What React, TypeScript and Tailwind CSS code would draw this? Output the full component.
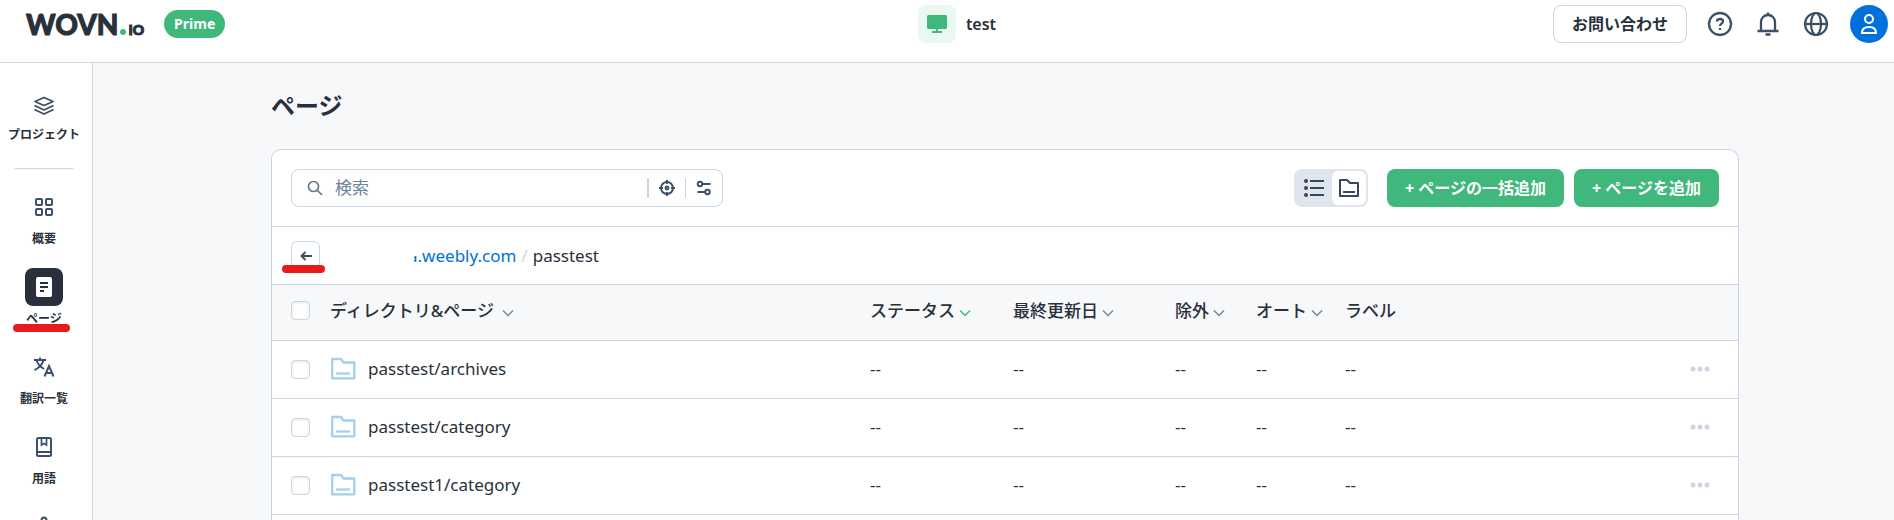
import type { ReactNode } from 'react'

const pages = ['passtest/archives', 'passtest/category', 'passtest1/category']

const columns = [
  { name: 'ステータス', sort: 'text-[#40b87c]' },
  { name: '最終更新日', sort: 'text-[#7088a0]' },
  { name: '除外', sort: 'text-[#7088a0]' },
  { name: 'オート', sort: 'text-[#7088a0]' },
]

const LayersIcon = () => (
  <svg width="22" height="20" viewBox="0 0 22 20" fill="none" stroke="currentColor" strokeWidth="1.9" strokeLinejoin="round">
    <path d="M11 1.500 20 5.500l-9 4-9-4z" />
    <path d="M1.500 9.500 11 14l9.500-4.500M1.500 13.500 11 18l9.500-4.500" />
  </svg>
)

const GridIcon = () => (
  <svg width="20" height="20" viewBox="0 0 20 20" fill="none" stroke="currentColor" strokeWidth="2">
    <rect x="2" y="2" width="6" height="6" rx="1" />
    <rect x="12" y="2" width="6" height="6" rx="1" />
    <rect x="2" y="12" width="6" height="6" rx="1" />
    <rect x="12" y="12" width="6" height="6" rx="1" />
  </svg>
)

const PageIcon = () => (
  <svg width="18" height="22" viewBox="0 0 18 22">
    <rect x="1" y="1" width="16" height="20" rx="2" fill="#fff" />
    <path d="M5 7h8M5 11h8M5 15h4" stroke="#28313b" strokeWidth="2" />
  </svg>
)

const TranslateIcon = () => (
  <svg width="22" height="22" viewBox="0 0 22 22" fill="none" stroke="currentColor" strokeWidth="2">
    <path d="M1 4h12M7 1.500V4M3.500 4.500C5 8.500 7.500 11 11 13M10.500 4.500C9 9 6 12 1.500 14" />
    <path d="M11.500 20.500 16 10l4.500 10.500M13 17h6" />
  </svg>
)

const BookIcon = () => (
  <svg width="18" height="22" viewBox="0 0 18 22" fill="none" stroke="currentColor" strokeWidth="2">
    <rect x="2" y="2" width="14" height="18" rx="1.500" />
    <path d="M2 16h14" />
    <path d="M6.500 2v7L9 7.500 11.500 9V2" strokeWidth="1.700" />
  </svg>
)

const PersonIcon = () => (
  <svg width="22" height="22" viewBox="0 0 22 22" fill="none" stroke="currentColor" strokeWidth="2">
    <circle cx="11" cy="4" r="2.500" />
    <path d="M11 7v5M4 20c0-5 3-8 7-8s7 3 7 8" />
  </svg>
)

const FolderIcon = () => (
  <svg width="26" height="24" viewBox="0 0 26 24" fill="none" stroke="currentColor" strokeWidth="2.300" strokeLinejoin="round">
    <path d="M2.200 2h8.800l2.500 3.500h10.800v15.800H2.200z" />
    <path d="M6 16.500h14" />
  </svg>
)

const Chevron = ({ className }: { className: string }) => (
  <svg width="12" height="8" viewBox="0 0 12 8" fill="none" stroke="currentColor" strokeWidth="1.500" className={className}>
    <path d="M1 1.500 6 6.500 11 1.500" />
  </svg>
)

const Underline = ({ className }: { className: string }) => (
  <span className={`absolute h-2 rounded-full bg-[#e61c1c] ${className}`} />
)

const Checkbox = ({ label }: { label: string }) => (
  <input
    type="checkbox"
    aria-label={label}
    className="block size-[19px] appearance-none rounded-[4px] border border-[#cbd5df] bg-white shadow-[inset_0_1px_3px_rgba(0,0,0,0.1)]"
  />
)

type NavItemProps = { icon: ReactNode; label?: string; active?: boolean }

const NavItem = ({ icon, label, active }: NavItemProps) => (
  <a href="#" className="relative flex flex-col items-center gap-1">
    <span className={`flex size-[38px] items-center justify-center rounded-lg ${active ? 'bg-[#28313b]' : 'text-[#3b5068]'}`}>
      {icon}
    </span>
    {label && <span className="text-xs leading-[18px] font-semibold whitespace-nowrap">{label}</span>}
    {active && <Underline className="top-14 left-[13px] w-[57px]" />}
  </a>
)

const Header = () => (
  <header className="grid h-[63px] shrink-0 grid-cols-[1fr_auto_1fr] items-start border-b border-[#cbd5e1] bg-white pt-[5px] pr-[6px] pl-[26px]">
    <div className="flex h-[38px] items-center">
      <a href="#" aria-label="WOVN.io" className="flex items-baseline font-['Lato',sans-serif] leading-none font-black [-webkit-text-stroke:1px]">
        <span className="text-[28px]">WOVN</span>
        <span className="mx-[2px] size-[6px] rounded-full bg-[#40b87c]" />
        <span className="text-sm leading-none">IO</span>
      </a>
      <span className="ml-5 flex h-7 items-center rounded-full bg-[#40b87c] px-[10px] text-sm font-bold text-white">Prime</span>
    </div>

    <div className="flex h-[38px] items-center gap-[10px]">
      <span className="flex size-[38px] items-center justify-center rounded-lg bg-[#eaf8f1] text-[#40b87c]">
        <svg width="20" height="18" viewBox="0 0 20 18" fill="currentColor">
          <rect width="20" height="14" rx="1.500" />
          <path d="M9 14h2v2h4v2H5v-2h4z" />
        </svg>
      </span>
      <span className="font-semibold">test</span>
    </div>

    <div className="flex h-[38px] items-center justify-end text-[#3b5068]">
      <button className="mr-5 h-[38px] rounded-lg border border-[#cbd5e1] px-[18px] font-semibold text-[#28313b]">お問い合わせ</button>
      <button aria-label="ヘルプ" className="mr-[22px]">
        <svg width="26" height="26" viewBox="0 0 26 26" fill="none" stroke="currentColor" strokeWidth="2.300">
          <circle cx="13" cy="13" r="11" />
          <path d="M10 10.500C10 8.800 11.200 8 13 8s3 1 3 2.500c0 2-3 2.200-3 4.500" />
          <path d="M13 17v2" />
        </svg>
      </button>
      <button aria-label="お知らせ" className="mr-[22px]">
        <svg width="26" height="26" viewBox="0 0 26 26" fill="none" stroke="currentColor" strokeWidth="2.300">
          <path d="M2.500 20h21M6 20v-9a7 7 0 0 1 14 0v9" />
          <path d="M13 1.500V4M10.500 23.500h5" />
        </svg>
      </button>
      <button aria-label="言語" className="mr-[21px]">
        <svg width="26" height="26" viewBox="0 0 26 26" fill="none" stroke="currentColor" strokeWidth="2.200">
          <circle cx="13" cy="13" r="11" />
          <ellipse cx="13" cy="13" rx="5" ry="11" />
          <path d="M2 13h22" />
        </svg>
      </button>
      <button aria-label="アカウント" className="flex size-[38px] items-center justify-center rounded-full bg-[#0070dd] text-white">
        <svg width="18" height="22" viewBox="0 0 18 22" fill="none" stroke="currentColor" strokeWidth="2">
          <circle cx="9" cy="6" r="4" />
          <path d="M2 20c0-4 2.500-6 7-6s7 2 7 6z" />
        </svg>
      </button>
    </div>
  </header>
)

const Toolbar = () => (
  <div className="flex items-center justify-between border-b border-[#cbd5e1] px-[19px] py-[19px]">
    <div className="flex h-[38px] w-[432px] items-center rounded-lg border border-[#cbd5e1] pr-[10px] pl-[15px] text-[#3b5068]">
      <svg width="16" height="16" viewBox="0 0 16 16" fill="none" stroke="#64798f" strokeWidth="1.700">
        <circle cx="6.500" cy="6.500" r="5" />
        <path d="m10 10 5 5" />
      </svg>
      <input type="search" aria-label="検索" placeholder="検索" className="ml-3 min-w-0 flex-1 text-[17px] outline-none placeholder:text-[#6b8299]" />
      <span className="h-5 w-[2px] bg-[#cbd5e1]" />
      <button aria-label="完全一致" className="mx-[9px]">
        <svg width="18" height="18" viewBox="0 0 18 18" fill="none" stroke="currentColor" strokeWidth="1.900">
          <circle cx="9" cy="9" r="6" />
          <circle cx="9" cy="9" r="1.500" />
          <path d="M9 1v4M9 13v4M1 9h4M13 9h4" />
        </svg>
      </button>
      <span className="h-5 w-px bg-[#cbd5e1]" />
      <button aria-label="絞り込み" className="ml-[10px]">
        <svg width="16" height="16" viewBox="0 0 16 16" fill="none" stroke="currentColor" strokeWidth="1.900">
          <circle cx="4" cy="4" r="2.300" />
          <circle cx="11.500" cy="12" r="2.300" />
          <path d="M6.500 4h8M1.500 12H9" />
        </svg>
      </button>
    </div>

    <div className="flex items-center">
      <div className="mr-[19px] flex h-[38px] w-[74px] items-center rounded-lg bg-[#dfe5ed] p-[2px] text-[#344860]">
        <button aria-label="リスト表示" className="flex h-full flex-1 items-center justify-center">
          <svg width="20" height="20" viewBox="0 0 20 20" fill="none" stroke="currentColor" strokeWidth="2">
            <path d="M6 3h14M6 10h14M6 17h14" />
            <g fill="currentColor" stroke="none">
              <circle cx="2" cy="3" r="2" />
              <circle cx="2" cy="10" r="2" />
              <circle cx="2" cy="17" r="2" />
            </g>
          </svg>
        </button>
        <button aria-label="フォルダ表示" className="flex h-[34px] w-[34px] items-center justify-center rounded-[6px] bg-white">
          <svg width="20" height="18" viewBox="0 0 20 18" fill="none" stroke="currentColor" strokeWidth="2" strokeLinejoin="round">
            <path d="M1 1h7l3 3h8v13H1z" />
            <path d="M4 13h12" />
          </svg>
        </button>
      </div>
      <button className="mr-[10px] h-[38px] rounded-lg bg-[#40b87c] px-[18px] font-bold text-white">+ ページの一括追加</button>
      <button className="h-[38px] rounded-lg bg-[#40b87c] px-[18px] font-bold text-white">+ ページを追加</button>
    </div>
  </div>
)

const Breadcrumb = () => (
  <div className="flex h-[58px] items-center border-b border-[#cbd5e1] px-[19px]">
    <button aria-label="戻る" className="relative flex size-[29px] items-center justify-center rounded-[6px] border border-[#cbd5e1] text-[#3b5068]">
      <svg width="12" height="10" viewBox="0 0 12 10" fill="none" stroke="currentColor" strokeWidth="1.900">
        <path d="M12 5H1.500M5.500 1l-4 4 4 4" />
      </svg>
      <Underline className="top-[23px] -left-[10px] w-[43px]" />
    </button>
    <nav className="ml-[88px] flex text-[17px] leading-6">
      <a href="#" className="relative text-[#0070dd]">
        a.weebly.com
        <span className="absolute top-0 left-0 h-full w-[6px] bg-white" />
        <span className="absolute top-0 left-0 h-3 w-[10px] bg-white" />
      </a>
      <span className="mx-[5px] text-[#cbd5e1]">/</span>
      <span>passtest</span>
    </nav>
  </div>
)

const PageTable = () => (
  <table className="w-full table-fixed text-left text-[17px] leading-6">
    <colgroup>
      <col className="w-[58px]" />
      <col />
      <col className="w-[143px]" />
      <col className="w-[162px]" />
      <col className="w-[81px]" />
      <col className="w-[89px]" />
      <col className="w-[320px]" />
      <col className="w-[73px]" />
    </colgroup>
    <thead>
      <tr className="h-[55px] border-b border-[#cbd5e1] bg-[#f6f8fa]">
        <th className="pb-[3px] pl-[19px]"><Checkbox label="すべて選択" /></th>
        <th className="pb-[3px] font-medium">
          <span className="flex items-center gap-2">ディレクトリ&amp;ページ<Chevron className="mt-1 text-[#7088a0]" /></span>
        </th>
        {columns.map((column) => (
          <th key={column.name} className="pb-[3px] font-medium">
            <span className="flex items-center gap-1 whitespace-nowrap">
              {column.name}
              <Chevron className={`mt-1 ${column.sort}`} />
            </span>
          </th>
        ))}
        <th className="pb-[3px] font-medium">ラベル</th>
        <th />
      </tr>
    </thead>
    <tbody>
      {pages.map((page) => (
        <tr key={page} className="h-[58px] border-b border-[#cbd5e1]">
          <td className="pl-[19px]"><Checkbox label={page} /></td>
          <td>
            <span className="flex items-center gap-3">
              <span className="text-[#a3d0ee]"><FolderIcon /></span>
              {page}
            </span>
          </td>
          <td>--</td>
          <td>--</td>
          <td>--</td>
          <td>--</td>
          <td>--</td>
          <td>
            <button aria-label="メニュー" className="ml-[25px] block text-[#cbd5e1]">
              <svg width="20" height="6" viewBox="0 0 20 6" fill="currentColor">
                <circle cx="3" cy="3" r="2.500" />
                <circle cx="10" cy="3" r="2.500" />
                <circle cx="17" cy="3" r="2.500" />
              </svg>
            </button>
          </td>
        </tr>
      ))}
    </tbody>
  </table>
)

const App = () => (
  <div className="flex h-screen flex-col overflow-hidden bg-[#f6f8fa] font-['Noto_Sans','Noto_Sans_CJK_JP',sans-serif] text-base text-[#28313b]">
    <Header />
    <div className="flex min-h-0 flex-1">
      <aside className="w-[93px] shrink-0 overflow-hidden border-r border-[#cbd5e1] bg-white pt-6 pr-1">
        <a href="#" className="flex flex-col items-center text-xs leading-5 font-semibold whitespace-nowrap">
          <span className="flex size-[38px] items-center justify-center text-[#3b5068]"><LayersIcon /></span>
          プロジェクト
        </a>
        <hr className="mx-[15px] mt-[23px] mb-[19px] border-[#cbd5e1]" />
        <nav className="flex flex-col gap-5">
          <NavItem icon={<GridIcon />} label="概要" />
          <NavItem icon={<PageIcon />} label="ページ" active />
          <NavItem icon={<TranslateIcon />} label="翻訳一覧" />
          <NavItem icon={<BookIcon />} label="用語" />
          <NavItem icon={<PersonIcon />} />
        </nav>
      </aside>
      <main className="flex min-w-0 flex-1 flex-col pt-[25px] pr-[155px] pl-[178px]">
        <h1 className="text-2xl leading-9 font-bold">ページ</h1>
        <section className="mt-[25px] flex-1 rounded-t-[10px] border border-b-0 border-[#cbd5e1] bg-white">
          <Toolbar />
          <Breadcrumb />
          <PageTable />
        </section>
      </main>
    </div>
  </div>
)

export default App
